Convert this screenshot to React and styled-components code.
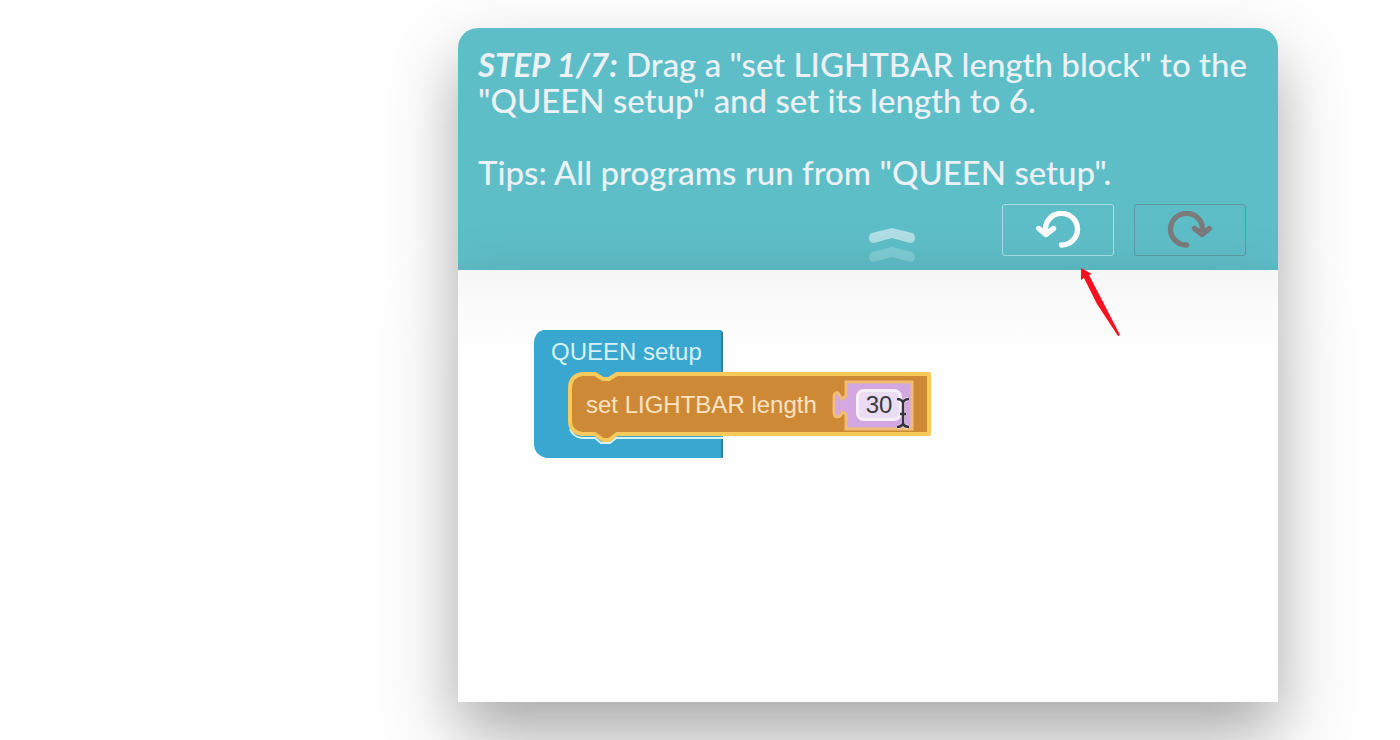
import React, { useState } from "react";
import styled, { createGlobalStyle } from "styled-components";

const GlobalStyle = createGlobalStyle`
  * { box-sizing: border-box; }
  body { margin: 0; background: #fefefe; font-family: Lato, "Open Sans", sans-serif; }
`;

const Page = styled.div`
  display: flex;
  min-height: 100vh;
  padding: 28px 122px 38px 458px;
  overflow: hidden;
`;

const Tutorial = styled.main`
  flex: 1;
  min-width: 0;
  display: flex;
  flex-direction: column;
`;

const Header = styled.header`
  padding: 18px 12px 14px 20px;
  border-radius: 20px 20px 0 0;
  background: #5ebec8;
  color: #ebf1f4;
  box-shadow: 0 32px 64px rgba(0, 0, 0, 0.34);
`;

const Instruction = styled.p`
  margin: 0 0 36px;
  font-size: 33px;
  font-weight: 500;
  line-height: 36px;
`;

const Tip = styled(Instruction)`
  margin-bottom: 14px;
`;

const Step = styled.em`
  font-weight: 700;
`;

const Toolbar = styled.div`
  display: flex;
  justify-content: flex-end;
  gap: 20px;
  padding-right: 20px;
`;

const ToolButton = styled.button`
  display: flex;
  align-items: center;
  justify-content: center;
  width: 112px;
  height: 52px;
  padding: 0;
  border: 1px solid ${(p) => (p.disabled ? "#6199a0" : "#a8e0e6")};
  border-radius: 3px;
  background: transparent;
  color: ${(p) => (p.disabled ? "#7b7b7b" : "#fff")};
`;

const CollapseButton = styled.button`
  display: flex;
  align-items: flex-end;
  width: 48px;
  height: 52px;
  margin-right: 66px;
  padding: 0;
  border: 0;
  background: transparent;
  color: #fff;

  svg { overflow: visible; }
`;

const Canvas = styled.section`
  position: relative;
  flex: 1;
  min-height: 432px;
  padding: 60px 76px;
  background: linear-gradient(#f6f6f6, #fbfbfb 38px, #fefefe 80px);
  box-shadow: 0 32px 64px rgba(0, 0, 0, 0.34);
`;

const Program = styled.div`
  position: relative;
  display: flex;
  flex-direction: column;
  width: 400px;
  height: 130px;
  font-family: "Liberation Sans", Arial, sans-serif;
  font-size: 24px;
  line-height: 44px;
`;

const Shapes = styled.svg`
  position: absolute;
  inset: 0;
`;

const BlockTitle = styled.span`
  position: relative;
  padding-left: 17px;
  color: #d7f1f6;
`;

const BlockRow = styled.label`
  position: relative;
  display: flex;
  align-items: center;
  height: 62px;
  padding-left: 52px;
  color: #fbe3c2;
`;

const NumberField = styled.input`
  width: 46px;
  height: 32px;
  margin-left: 39px;
  padding: 0 0 0 7px;
  border: 3px solid #f8effb;
  border-radius: 8px;
  background: #eadcf2;
  color: #3c3842;
  font: inherit;
  outline: 0;
`;

const Pointer = styled.svg`
  position: absolute;
  left: 361px;
  top: 67px;
`;

const Arrow = styled.svg`
  position: absolute;
  top: -4px;
  right: 156px;
`;

function TurnIcon({ flipped }) {
  return (
    <svg width="46" height="38" viewBox="0 0 46 38" fill="none" stroke="currentColor" strokeLinecap="round" strokeLinejoin="round" aria-hidden="true">
      <g transform={flipped ? "translate(46 0) scale(-1 1)" : undefined}>
        <path d="M10.5 22 V18.5 A16 15.8 0 1 1 26.5 34" strokeWidth="5.4" />
        <path d="M3.8 17.5 L10.8 23.5 L18.5 17.5" strokeWidth="5.4" />
      </g>
    </svg>
  );
}

function ChevronsIcon() {
  return (
    <svg width="48" height="44" viewBox="0 0 48 44" fill="currentColor" aria-hidden="true">
      <path opacity=".5" d="M4 21 Q1 22 1 26 Q1 31 6 31 L24 26 L42 31 Q47 31 47 26 Q47 22 44 21 L24 16 Z" />
      <path opacity=".2" d="M4 40 Q1 41 1 45 Q1 50 6 50 L24 45 L42 50 Q47 50 47 45 Q47 41 44 40 L24 35 Z" />
    </svg>
  );
}

export default function App() {
  const [length, setLength] = useState("30");
  return (
    <>
      <GlobalStyle />
      <Page>
        <Tutorial>
          <Header>
            <Instruction>
              <Step>STEP 1/7:</Step> Drag a "set LIGHTBAR length block" to the "QUEEN setup" and set its length to 6.
            </Instruction>
            <Tip>Tips: All programs run from "QUEEN setup".</Tip>
            <Toolbar>
              <CollapseButton aria-label="Collapse"><ChevronsIcon /></CollapseButton>
              <ToolButton aria-label="Undo"><TurnIcon /></ToolButton>
              <ToolButton aria-label="Redo" disabled><TurnIcon flipped /></ToolButton>
            </Toolbar>
          </Header>
          <Canvas>
            <Program>
              <Shapes width="400" height="130" viewBox="0 0 400 130" aria-hidden="true">
                <path d="M9 0 H187 L189 2 V128 H12 Q7 127 3 123 Q0 119 0 115 V12 Q1 2 9 0Z" fill="#39a7cf" />
                <path d="M188 2 V42 M188 109 V127" stroke="#397c96" strokeWidth="2" />
                <path d="M36 99 Q39 107 48 108 H61 L67 113 H76 L82 108 H190" fill="none" stroke="#d8f1f4" strokeWidth="2" />
                <path d="M48 44 H61 L69 49 H75 L83 44 H395 V104 H83 L75 110 H69 L61 104 H48 Q36 102 36 91 V58 Q36 46 48 44Z" fill="#ce8936" stroke="#f8c95b" strokeWidth="4" strokeLinejoin="round" />
                <path d="M312 52 H378 V99 H312 V84 L308 82 Q307 87 303 87 Q300 87 300 82 V67 Q300 62 304 63 L308 69 L312 66Z" fill="#d3a8e2" stroke="#f1bd72" strokeWidth="3" />
              </Shapes>
              <BlockTitle>QUEEN setup</BlockTitle>
              <BlockRow>
                set LIGHTBAR length
                <NumberField value={length} onChange={(e) => setLength(e.target.value)} />
              </BlockRow>
              <Pointer width="16" height="32" viewBox="0 0 16 32" fill="none" aria-hidden="true">
                <path d="M2 2 Q6 2 8 5 Q10 2 14 2 M8 5 V27 M5 17 H11 M2 30 Q6 30 8 27 Q10 30 14 30" stroke="#fff" strokeWidth="4" opacity=".6" />
                <path d="M2 2 Q6 2 8 5 Q10 2 14 2 M8 5 V27 M5 17 H11 M2 30 Q6 30 8 27 Q10 30 14 30" stroke="#38323c" strokeWidth="2.5" />
              </Pointer>
            </Program>
            <Arrow width="42" height="72" viewBox="0 0 42 72" fill="#fb1020" aria-hidden="true">
              <path d="M1 2 L12 8 L9 9 L22 34 L40 69 L38 70 L17 38 L4 12 L1 14Z" />
            </Arrow>
          </Canvas>
        </Tutorial>
      </Page>
    </>
  );
}
